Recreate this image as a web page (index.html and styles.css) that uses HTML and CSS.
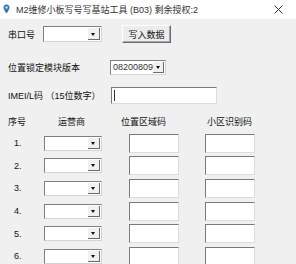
FILE: index.html
```html
<!DOCTYPE html>
<html lang="zh">
<head>
    <meta charset="UTF-8">
    <title>M2维修小板写号写基站工具</title>
    <link rel="stylesheet" href="styles.css">
</head>
<body>
    <div class="window">
        <div class="titlebar">
            <svg class="app-icon" width="7" height="10" viewBox="0 0 7 10">
                <path d="M3.5 0.5 C1.5 0.5 0.5 2 0.5 3.5 C0.5 5.5 3.5 9.5 3.5 9.5 C3.5 9.5 6.5 5.5 6.5 3.5 C6.5 2 5.5 0.5 3.5 0.5 Z" fill="#3b6fb6"/>
                <circle cx="3.5" cy="3.5" r="1.2" fill="#cfe0f5"/>
            </svg>
            <span class="title">M2维修小板写号写基站工具 (B03) 剩余授权:2</span>
            <svg class="close" width="9" height="9" viewBox="0 0 9 9">
                <path d="M0.5 0.5 L8.5 8.5 M8.5 0.5 L0.5 8.5" stroke="#333" stroke-width="1"/>
            </svg>
        </div>

        <div class="content">
            <div class="row row-port">
                <span class="label label-port">串口号</span>
                <div class="combo combo-port"><span class="combo-text"></span><span class="arrow"></span></div>
                <button class="btn-write">写入数据</button>
            </div>

            <div class="row row-version">
                <span class="label label-version">位置锁定模块版本</span>
                <div class="combo combo-version"><span class="combo-text">08200809</span><span class="arrow"></span></div>
            </div>

            <div class="row row-imei">
                <span class="label label-imei">IMEI/L码 （15位数字）</span>
                <div class="edit edit-imei"><span class="caret"></span></div>
            </div>

            <div class="grid">
                <span class="head">序号</span>
                <span class="head head-center">运营商</span>
                <span class="head head-center">位置区域码</span>
                <span class="head head-center">小区识别码</span>
            </div>

            <div class="grid rows" id="rows"></div>
        </div>
    </div>

    <script>
        // 6 行数据输入
        const rows = document.getElementById('rows');
        for (let i = 1; i <= 6; i++) {
            rows.innerHTML += `
                <span class="num">${i}.</span>
                <div class="cell"><div class="combo combo-op"><span class="combo-text"></span><span class="arrow"></span></div></div>
                <div class="cell"><div class="edit edit-cell"></div></div>
                <div class="cell"><div class="edit edit-cell"></div></div>
            `;
        }
    </script>
</body>
</html>
```

FILE: styles.css
```css
* {
    box-sizing: border-box;
}

body {
    margin: 0;
    font-family: "Liberation Sans", "Noto Sans CJK SC", sans-serif;
    font-size: 9px;
    color: #111;
    background: #f0f0f0;
}

.window {
    width: 296px;
    height: 264px;
    overflow: hidden;
}

.titlebar {
    height: 19px;
    background: #fff;
    display: flex;
    align-items: center;
    padding: 0 0 1px 3px;
}

.app-icon {
    margin-right: 6px;
}

.title {
    flex: 1;
    color: #333;
    white-space: nowrap;
}

.close {
    margin-right: 13px;
}

.content {
    padding: 6px 0 0 8px;
}

.row {
    display: flex;
    align-items: center;
}

.row-port {
    height: 18px;
}

.label-port {
    width: 35px;
}

.btn-write {
    margin-left: 20px;
    width: 49px;
    height: 18px;
    padding: 0;
    font-family: inherit;
    font-size: 9px;
    color: #111;
    background: #ececec;
    border: 1px solid;
    border-color: #ffffff #6b6b6b #6b6b6b #ffffff;
    box-shadow: inset -1px -1px 0 #a8a8a8;
}

.row-version {
    margin-top: 17px;
    height: 15px;
}

.label-version {
    width: 102px;
}

.row-imei {
    margin-top: 12px;
    height: 17px;
}

.label-imei {
    width: 103px;
}

/* combo box */
.combo {
    display: flex;
    align-items: stretch;
    background: #fff;
    border: 1px solid;
    border-color: #7f7f7f #d4d4d4 #d4d4d4 #7f7f7f;
}

.combo-text {
    flex: 1;
    padding-left: 2px;
    line-height: 13px;
}

.arrow {
    width: 12px;
    margin: 1px 1px 1px 0;
    background: #f0f0f0;
    border-right: 1px solid #6b6b6b;
    border-bottom: 1px solid #6b6b6b;
    position: relative;
}

.arrow::after {
    content: "";
    position: absolute;
    left: 3px;
    top: 5px;
    border-left: 2.5px solid transparent;
    border-right: 2.5px solid transparent;
    border-top: 3px solid #111;
}

.combo-port {
    width: 59px;
    height: 16px;
}

.combo-version {
    width: 56px;
    height: 15px;
}

.combo-version .combo-text {
    color: #333;
    line-height: 12px;
}

.combo-version .arrow::after {
    top: 4px;
}

/* edit box */
.edit {
    background: #fff;
    border: 1px solid;
    border-color: #7a7a7a #dcdcdc #dcdcdc #7a7a7a;
}

.edit-imei {
    width: 106px;
    height: 17px;
    position: relative;
}

.caret {
    position: absolute;
    left: 2px;
    top: 2px;
    width: 1px;
    height: 11px;
    background: #333;
}

/* table */
.grid {
    display: grid;
    grid-template-columns: 36px 85px 76px 50px;
    align-items: center;
}

.grid:not(.rows) {
    margin-top: 11px;
    height: 12px;
}

.head-center {
    text-align: center;
}

.grid .head:nth-child(2) {
    margin-left: -30px;
}

.grid .head:nth-child(3) {
    margin-left: -10px;
    text-align: left;
    padding-left: 2px;
}

.grid .head:nth-child(4) {
    text-align: left;
    padding-left: 2px;
}

.rows {
    margin-top: 5px;
    grid-auto-rows: 22.6px;
}

.num {
    padding-left: 6px;
}

.cell {
    display: flex;
    align-items: center;
}

.combo-op {
    width: 58px;
    height: 15px;
}

.combo-op .arrow::after {
    top: 4px;
}

.edit-cell {
    width: 50px;
    height: 19px;
}
```
